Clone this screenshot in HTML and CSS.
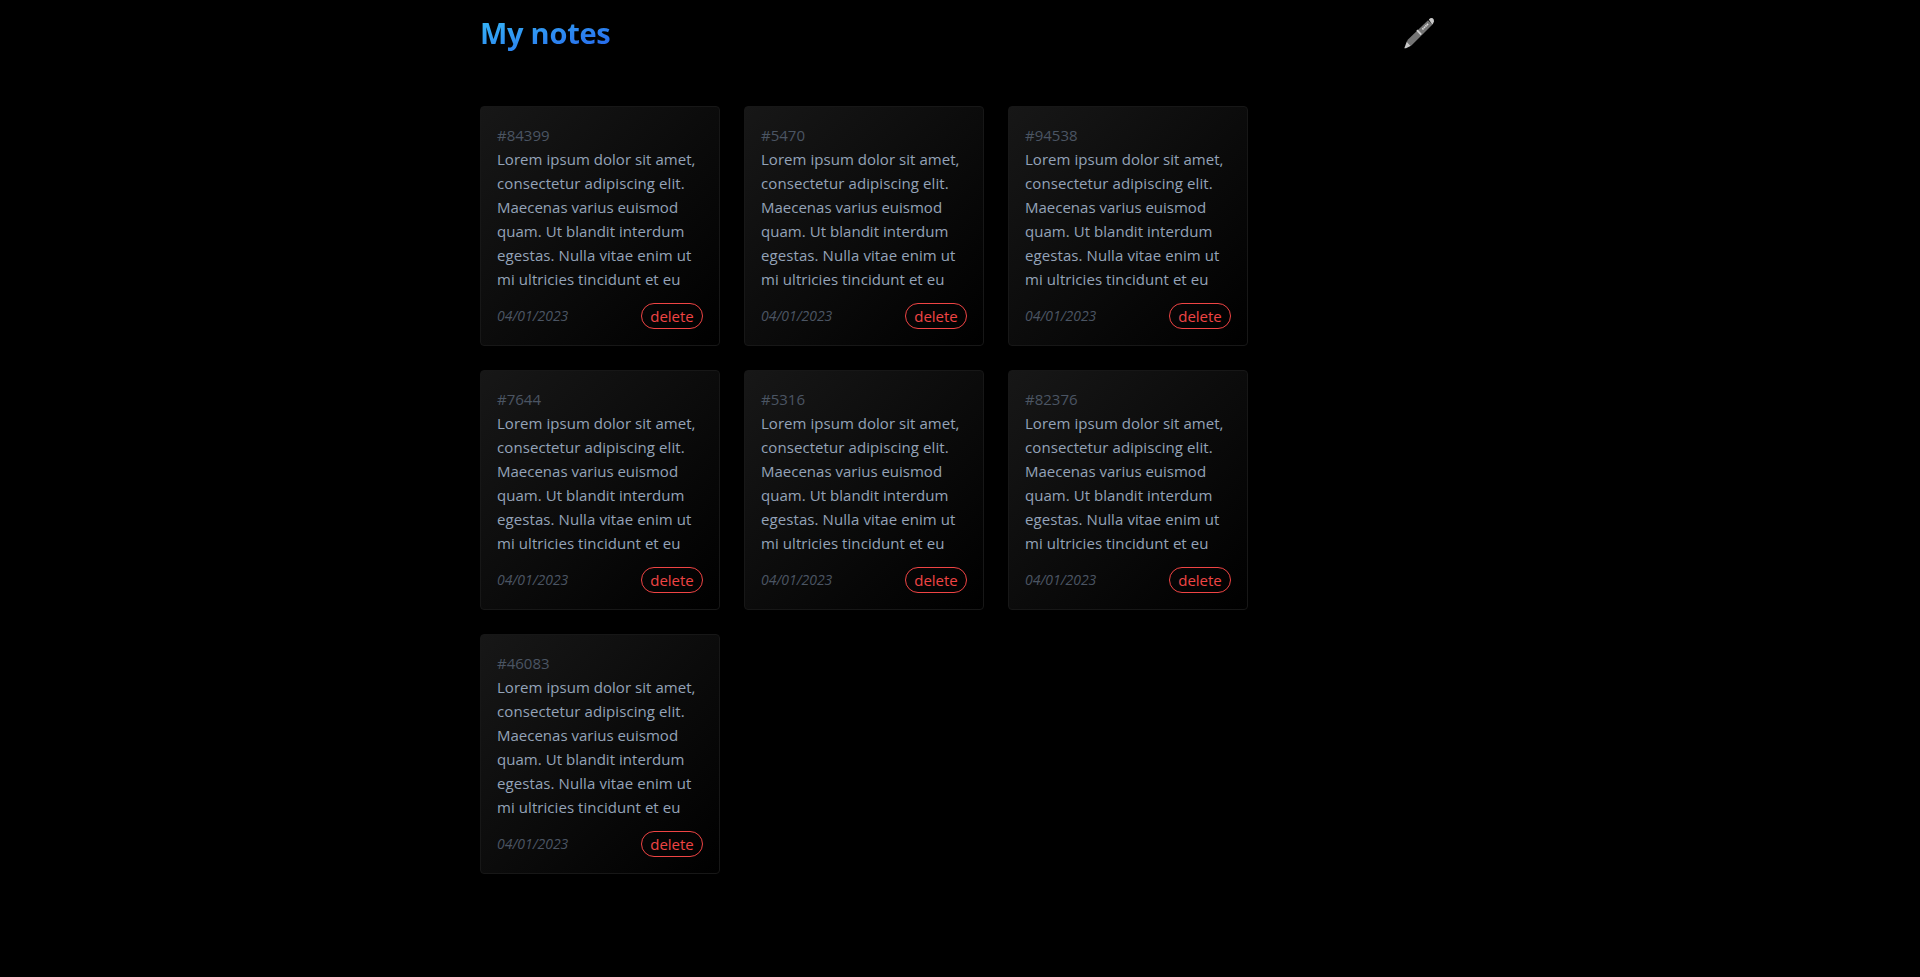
FILE: index.html
```html
<!DOCTYPE html>
<html lang="en">
<head>
<meta charset="utf-8">
<title>My notes</title>
<link rel="stylesheet" href="styles.css">
</head>
<body>
<div class="page">
  <header class="header">
    <h1 class="title">My notes</h1>
    <button class="new-note" aria-label="New note">
      <svg class="pen" width="32" height="34" viewBox="0 0 32 34">
        <path d="M1.3 32.3 3.8 25.6 8 29.7 3 32.2Z" fill="#c8c8c8"/>
        <path d="M3.8 25.6 5 23.4 25 4.3 29.5 8.4 9.7 28.2 7.8 29.9Z" fill="#747474"/>
        <path d="M25.8 3.6 27.2 2.3Q29.3 1.3 30.6 3.2 31.7 5 30.2 7.2L29.2 8.4Z" fill="#c8c8c8"/>
        <path d="M14 14.2 18.2 18.7" stroke="#d0d0d0" stroke-width="1.8"/>
        <path d="M19.4 13.4 25.4 7.6" stroke="#dcdcdc" stroke-width="1.7" stroke-dasharray="1.5 .6"/>
      </svg>
    </button>
  </header>
  <main class="notes">
    <article class="note"><h2 class="note-id">#84399</h2><p class="note-text"><span class="l1">Lorem ipsum dolor sit amet,</span><br><span class="l2">consectetur adipiscing elit.</span><br><span class="l3">Maecenas varius euismod</span><br><span class="l4">quam. Ut blandit interdum</span><br><span class="l5">egestas. Nulla vitae enim ut</span><br><span class="l6">mi ultricies tincidunt et eu</span></p><footer class="note-footer"><time class="date">04/01/2023</time><button class="delete">delete</button></footer></article>
    <article class="note"><h2 class="note-id">#5470</h2><p class="note-text"><span class="l1">Lorem ipsum dolor sit amet,</span><br><span class="l2">consectetur adipiscing elit.</span><br><span class="l3">Maecenas varius euismod</span><br><span class="l4">quam. Ut blandit interdum</span><br><span class="l5">egestas. Nulla vitae enim ut</span><br><span class="l6">mi ultricies tincidunt et eu</span></p><footer class="note-footer"><time class="date">04/01/2023</time><button class="delete">delete</button></footer></article>
    <article class="note"><h2 class="note-id">#94538</h2><p class="note-text"><span class="l1">Lorem ipsum dolor sit amet,</span><br><span class="l2">consectetur adipiscing elit.</span><br><span class="l3">Maecenas varius euismod</span><br><span class="l4">quam. Ut blandit interdum</span><br><span class="l5">egestas. Nulla vitae enim ut</span><br><span class="l6">mi ultricies tincidunt et eu</span></p><footer class="note-footer"><time class="date">04/01/2023</time><button class="delete">delete</button></footer></article>
    <article class="note"><h2 class="note-id">#7644</h2><p class="note-text"><span class="l1">Lorem ipsum dolor sit amet,</span><br><span class="l2">consectetur adipiscing elit.</span><br><span class="l3">Maecenas varius euismod</span><br><span class="l4">quam. Ut blandit interdum</span><br><span class="l5">egestas. Nulla vitae enim ut</span><br><span class="l6">mi ultricies tincidunt et eu</span></p><footer class="note-footer"><time class="date">04/01/2023</time><button class="delete">delete</button></footer></article>
    <article class="note"><h2 class="note-id">#5316</h2><p class="note-text"><span class="l1">Lorem ipsum dolor sit amet,</span><br><span class="l2">consectetur adipiscing elit.</span><br><span class="l3">Maecenas varius euismod</span><br><span class="l4">quam. Ut blandit interdum</span><br><span class="l5">egestas. Nulla vitae enim ut</span><br><span class="l6">mi ultricies tincidunt et eu</span></p><footer class="note-footer"><time class="date">04/01/2023</time><button class="delete">delete</button></footer></article>
    <article class="note"><h2 class="note-id">#82376</h2><p class="note-text"><span class="l1">Lorem ipsum dolor sit amet,</span><br><span class="l2">consectetur adipiscing elit.</span><br><span class="l3">Maecenas varius euismod</span><br><span class="l4">quam. Ut blandit interdum</span><br><span class="l5">egestas. Nulla vitae enim ut</span><br><span class="l6">mi ultricies tincidunt et eu</span></p><footer class="note-footer"><time class="date">04/01/2023</time><button class="delete">delete</button></footer></article>
    <article class="note"><h2 class="note-id">#46083</h2><p class="note-text"><span class="l1">Lorem ipsum dolor sit amet,</span><br><span class="l2">consectetur adipiscing elit.</span><br><span class="l3">Maecenas varius euismod</span><br><span class="l4">quam. Ut blandit interdum</span><br><span class="l5">egestas. Nulla vitae enim ut</span><br><span class="l6">mi ultricies tincidunt et eu</span></p><footer class="note-footer"><time class="date">04/01/2023</time><button class="delete">delete</button></footer></article>
  </main>
</div>
</body>
</html>
```

FILE: styles.css
```css
* { box-sizing: border-box; margin: 0; }
body {
  min-height: 100vh;
  background: #000;
  font-family: "Segoe UI", "Open Sans", "Noto Sans", sans-serif;
  font-size: 15px;
  line-height: 24px;
}
button { padding: 0; border: 0; background: none; font: inherit; cursor: pointer; }
.page { width: 960px; margin: 0 auto; }
.header {
  display: flex;
  justify-content: space-between;
  align-items: center;
  height: 66px;
}
.title {
  font-size: 29px;
  font-weight: 700;
  line-height: 36px;
  letter-spacing: -0.25px;
  color: transparent;
  background: linear-gradient(to bottom right, #38bdf8, #2563eb);
  -webkit-background-clip: text;
  background-clip: text;
}
.new-note { display: flex; padding-right: 5px; }
.pen { display: block; }
.notes {
  display: grid;
  grid-template-columns: repeat(3, 240px);
  gap: 24px;
  padding-top: 40px;
}
.note {
  display: flex;
  flex-direction: column;
  height: 240px;
  padding: 16px;
  border: 1px solid #171717;
  border-radius: 4px;
  background: linear-gradient(to bottom right, #171717, #000);
}
.note-id { font-size: 15px; font-weight: 400; color: #4b5563; }
.note-text { color: #94a3b8; white-space: nowrap; }
.l1, .l4 { letter-spacing: 0.04px; }
.l2, .l5 { letter-spacing: 0.085px; }
.l6 { letter-spacing: 0.065px; }
.note-footer {
  display: flex;
  justify-content: space-between;
  align-items: center;
  margin-top: auto;
}
.date { font-size: 14px; font-style: italic; color: #4b5563; letter-spacing: -0.02px; }
.delete {
  width: 62px;
  height: 26px;
  border: 1px solid #ef4444;
  border-radius: 13px;
  color: #ef4444;
  line-height: 24px;
}
```
